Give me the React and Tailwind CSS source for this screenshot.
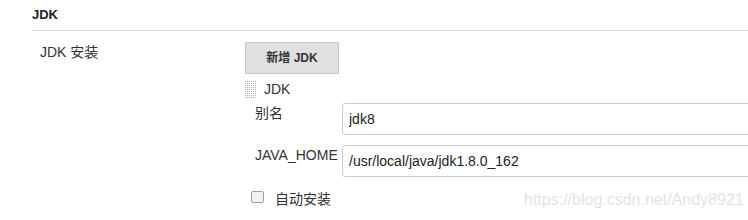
import React from "react";

function Handle() {
  const dots = [];
  for (let r = 0; r < 9; r++) {
    for (let c = 0; c < 6; c++) {
      dots.push(<rect key={r + "-" + c} x={c * 2} y={r * 2} width="1" height="1" fill="#b0b0b0" />);
    }
  }
  return (
    <svg width="11" height="17" viewBox="0 0 11 17" className="shrink-0">
      {dots}
    </svg>
  );
}

export default function App() {
  return (
    <div
      className="relative w-[748px] h-[220px] bg-white overflow-hidden text-[#333]"
      style={{ fontFamily: '"Liberation Sans", Arial, "Noto Sans CJK SC", sans-serif' }}
    >
      <div className="ml-[32px] h-[31px] border-b border-[#dcdcdc] pt-[7px] text-[13px] font-bold leading-[16px] text-[#222]">
        JDK
      </div>
      <div className="flex pl-[40px]">
        <div className="w-[205px] shrink-0 pt-[13px] text-[14px] leading-[16px]">JDK 安装</div>
        <div className="flex-1 min-w-0 flex flex-col">
          <button className="mt-[11px] w-[94px] h-[32px] bg-[#e0e0e0] border border-[#c6c6c6] text-[12px] font-bold text-[#333] leading-none">
            新增 JDK
          </button>
          <div className="flex items-center h-[22px] mt-[4px] gap-[8px]">
            <Handle />
            <span className="text-[14px] leading-[16px]">JDK</span>
          </div>
          <div className="flex pl-[10px] mt-[3px]">
            <div className="w-[87px] shrink-0 pt-[2px] text-[14px] leading-[16px]">别名</div>
            <input
              readOnly
              value="jdk8"
              className="w-[420px] shrink-0 h-[32px] border border-[#ccc] rounded-[3px] px-[6px] text-[14px] text-[#222] outline-none"
              style={{ fontFamily: '"Liberation Sans", Arial, sans-serif' }}
            />
          </div>
          <div className="flex pl-[10px] mt-[10px]">
            <div className="w-[87px] shrink-0 pt-[2px] text-[14px] leading-[16px]">JAVA_HOME</div>
            <input
              readOnly
              value="/usr/local/java/jdk1.8.0_162"
              className="w-[420px] shrink-0 h-[32px] border border-[#ccc] rounded-[3px] px-[6px] text-[14px] text-[#222] outline-none"
              style={{ fontFamily: '"Liberation Sans", Arial, sans-serif' }}
            />
          </div>
          <div className="flex items-start pl-[6px] mt-[13px] gap-[11px]">
            <span className="w-[13px] h-[12px] mt-[1px] border border-[#a0a0a0] rounded-[2px] bg-[#f2f2f2]" />
            <span className="text-[14px] leading-[16px] mt-[1px]">自动安装</span>
          </div>
        </div>
      </div>
      <div className="absolute left-[524px] top-[191px] text-[16px] leading-[18px] text-[#e4e4e4]">
        https://blog.csdn.net/Andy8921
      </div>
    </div>
  );
}
